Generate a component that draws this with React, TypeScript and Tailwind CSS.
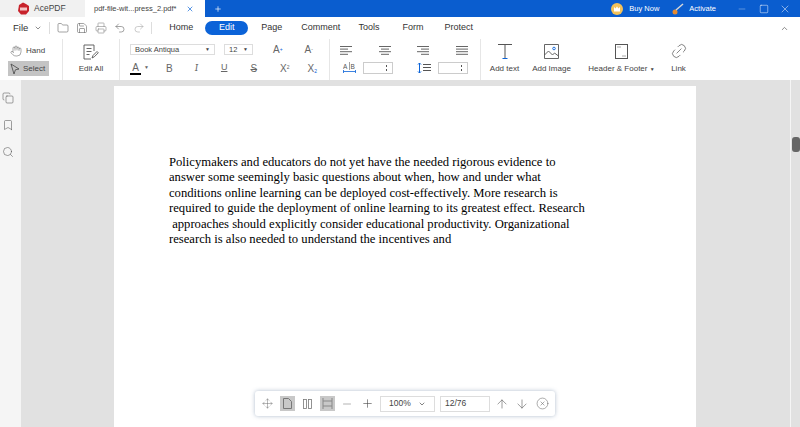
import { Hand, Undo2, Redo2, Printer, Save, Folder, ChevronDown, ChevronUp, Plus, X, Minus, Square, ArrowUp, ArrowDown, CircleX, Move, Bookmark, Search, Copy, Link2 } from "lucide-react";

const label = "text-[8px] leading-[10px] text-[#444] whitespace-nowrap";

function AlignIcon({ kind }: { kind: string }) {
  const rows = kind === "left" ? [[0, 12], [0, 8], [0, 12], [0, 8]] : kind === "center" ? [[0, 12], [2, 10], [0, 12], [2, 10]] : kind === "right" ? [[0, 12], [4, 12], [0, 12], [4, 12]] : [[0, 12], [0, 12], [0, 12], [0, 12]];
  return (
    <svg width="12" height="9" viewBox="0 0 12 9" stroke="#666" strokeWidth="1">
      {rows.map((r, i) => <line key={i} x1={r[0]} x2={r[1]} y1={i * 2.6 + 0.5} y2={i * 2.6 + 0.5} />)}
    </svg>
  );
}

function Spin() {
  return (
    <div className="w-[30px] h-[12px] border border-[#ccc] flex items-center justify-end pr-[4px]">
      <svg width="3" height="8" viewBox="0 0 3 8" fill="#555"><rect x="1" y="1" width="1" height="2" /><rect x="1" y="5" width="1" height="2" /></svg>
    </div>
  );
}

function Menu() {
  return (
    <div className="h-[22px] flex items-center text-[9px] text-[#333]">
      <span className="ml-[13px] text-[9.5px]">File</span>
      <ChevronDown size={8} className="ml-[6px] text-[#555]" />
      <div className="w-px h-[12px] bg-[#ddd] ml-[7px]" />
      <div className="flex items-center gap-[7px] ml-[7px] text-[#666]">
        <Folder size={12} strokeWidth={1.2} />
        <Save size={12} strokeWidth={1.2} />
        <Printer size={12} strokeWidth={1.2} className="text-[#888]" />
        <Undo2 size={12} strokeWidth={1.2} />
        <Redo2 size={12} strokeWidth={1.2} className="text-[#aaa]" />
      </div>
      <div className="w-px h-[12px] bg-[#ddd] ml-[6px]" />
      <span className="ml-[17px]">Home</span>
      <span className="ml-[12px] w-[43px] h-[14px] rounded-full bg-[#0b63d8] text-white flex items-center justify-center">Edit</span>
      <span className="ml-[13px]">Page</span>
      <span className="ml-[19px]">Comment</span>
      <span className="ml-[18px]">Tools</span>
      <span className="ml-[23px]">Form</span>
      <span className="ml-[21px]">Protect</span>
      <ChevronUp size={9} className="ml-auto mr-[11px] text-[#666]" />
    </div>
  );
}

function Ribbon() {
  return (
    <div className="h-[41px] flex text-[#555]">
      <div className="w-[63px] border-r border-[#e6e6e6] pl-[8px] shrink-0">
        <div className="h-[17px] flex items-center gap-[4px] pl-[2px] pt-[6px]">
          <Hand size={12} strokeWidth={1} />
          <span className={label}>Hand</span>
        </div>
        <div className="w-[41px] h-[15px] mt-[5px] bg-[#c4c4c4] flex items-center gap-[3px] pl-[2px]">
          <svg width="10" height="12" viewBox="0 0 10 12" fill="none" stroke="#444" strokeWidth="0.8" strokeLinejoin="round"><path d="M1 1l8 5-3.6.8L4 11z" /></svg>
          <span className={label}>Select</span>
        </div>
      </div>
      <div className="w-[57px] border-r border-[#e6e6e6] flex flex-col items-center shrink-0">
        <svg className="mt-[5px]" width="16" height="16" viewBox="0 0 16 16" fill="none" stroke="#555" strokeWidth="0.9">
          <path d="M11 7V1H1v14h7" />
          <path d="M3.5 4.5h5M3.5 7.5h5M3.5 10.5h3" />
          <path d="M9 14l1-2.5 4-4 1.3 1.3-4 4z" />
        </svg>
        <span className={`${label} mt-[4px]`}>Edit All</span>
      </div>
      <div className="w-[210px] border-r border-[#e6e6e6] pl-[10px] shrink-0">
        <div className="flex items-center h-[11px] mt-[5px]">
          <div className="w-[85px] h-[11px] border border-[#ddd] flex items-center justify-between px-[4px] text-[7.5px] text-[#444]">
            <span>Book Antiqua</span><span className="text-[5px]">▼</span>
          </div>
          <div className="w-[29px] h-[11px] ml-[9px] border border-[#ddd] flex items-center justify-between px-[4px] text-[7.5px] text-[#444]">
            <span>12</span><span className="text-[5px]">▼</span>
          </div>
          <span className="ml-[20px] text-[10px] text-[#666]">A<sup className="text-[5px] text-[#0b63d8]">+</sup></span>
          <span className="ml-[22px] text-[10px] text-[#666]">A<sup className="text-[5px]">-</sup></span>
        </div>
        <div className="flex items-center h-[14px] mt-[6px] text-[10px] text-[#666]">
          <span className="border-b-2 border-black leading-[11px] w-[11px] text-center">A</span>
          <span className="text-[5px] ml-[3px]">▼</span>
          <span className="ml-[17px]">B</span>
          <span className="italic font-serif ml-[22px]">I</span>
          <span className="underline ml-[23px] text-[9px]">U</span>
          <span className="line-through ml-[23px]">S</span>
          <span className="ml-[23px]">X<sup className="text-[5px]">2</sup></span>
          <span className="ml-[18px]">X<sub className="text-[5px] text-[#0b63d8]">2</sub></span>
        </div>
      </div>
      <div className="w-[151px] border-r border-[#e6e6e6] pl-[10px] shrink-0">
        <div className="flex gap-[26.5px] h-[9px] mt-[7px]">
          <AlignIcon kind="left" />
          <AlignIcon kind="center" />
          <AlignIcon kind="right" />
          <AlignIcon kind="full" />
        </div>
        <div className="flex items-center h-[12px] mt-[7px]">
          <svg className="ml-[3px]" width="13" height="12" viewBox="0 0 13 12" fill="none" strokeWidth="0.8">
            <text x="0" y="6.5" fontSize="6.5" fill="#555">A</text>
            <text x="7.5" y="6.5" fontSize="6.5" fill="#555">B</text>
            <path d="M6.5 0v8" stroke="#888" />
            <path d="M.5 8v3M12.5 8v3M.5 9.5h12" stroke="#0b63d8" />
          </svg>
          <div className="ml-[7px]"><Spin /></div>
          <svg className="ml-[24px]" width="14" height="12" viewBox="0 0 14 12" fill="none" strokeWidth="1">
            <path d="M2.5 1v10M1 2.5L2.5 1 4 2.5M1 9.5L2.5 11 4 9.5" stroke="#0b63d8" />
            <path d="M6 2.5h8M6 5.5h8M6 8.5h8" stroke="#555" />
          </svg>
          <div className="ml-[7px]"><Spin /></div>
        </div>
      </div>
      <div className="flex flex-col items-center w-[47px] shrink-0">
        <svg className="mt-[5px]" width="14" height="15" viewBox="0 0 14 15" fill="none" strokeWidth="1">
          <path d="M0 .5h14M7 .5v14" stroke="#555" />
          <path d="M4.5 14.5h5" stroke="#0b63d8" />
        </svg>
        <span className={`${label} mt-[5px]`}>Add text</span>
      </div>
      <div className="flex flex-col items-center w-[47px] shrink-0">
        <svg className="mt-[5px]" width="15" height="15" viewBox="0 0 15 15" fill="none" stroke="#555" strokeWidth="0.9">
          <path d="M.5.5h14v14H.5z" />
          <path d="M.5 11l4-4 4 4 2-2 4 3" />
          <circle cx="10" cy="4.5" r="1.3" stroke="#0b63d8" />
        </svg>
        <span className={`${label} mt-[5px]`}>Add Image</span>
      </div>
      <div className="flex flex-col items-center w-[93px] shrink-0">
        <svg className="mt-[5px]" width="13" height="15" viewBox="0 0 13 15" fill="none" stroke="#555"><rect x="0.5" y="0.5" width="12" height="14" /><line x1="2" x2="6" y1="3" y2="3" stroke="#aaa" /><line x1="7" x2="11" y1="12" y2="12" stroke="#aaa" /></svg>
        <span className={`${label} mt-[5px]`}>Header &amp; Footer <span className="text-[5px]">▼</span></span>
      </div>
      <div className="flex flex-col items-center w-[21px] shrink-0">
        <Link2 size={18} strokeWidth={0.9} className="mt-[3px] -rotate-45" />
        <span className={`${label} mt-[4px]`}>Link</span>
      </div>
    </div>
  );
}

const lines = [
  "Policymakers and educators do not yet have the needed rigorous evidence to",
  "answer some seemingly basic questions about when, how and under what",
  "conditions online learning can be deployed cost-effectively. More research is",
  "required to guide the deployment of online learning to its greatest effect. Research",
  "\u00a0approaches should explicitly consider educational productivity. Organizational",
  "research is also needed to understand the incentives and",
];

export default function App() {
  return (
    <div className="w-[800px] h-[427px] overflow-hidden flex flex-col bg-white font-['Liberation_Sans',sans-serif] relative">
      {/* title bar */}
      <div className="h-[17px] flex items-center shrink-0 bg-[#0a5dcf] text-white">
        <div className="w-[85px] h-full bg-[#f1f1f1] flex items-center text-[#444] text-[8.5px]">
          <svg className="ml-[17px]" width="13" height="13" viewBox="0 0 13 13"><path d="M2 3l4-2.5 3 1.5 3 2v5l-3 3.5H4L1 9z" fill="#c8232c" /><rect x="3" y="5.5" width="7" height="3" fill="#f3c6c6" /></svg>
          <span className="ml-[4px]">AcePDF</span>
        </div>
        <div className="w-[120px] h-full bg-white flex items-center text-[#444] text-[7.5px]">
          <span className="ml-[9px] w-[92px] whitespace-nowrap">pdf-file-wit...press_2.pdf*</span>
          <X size={8} className="text-[#0b63d8]" />
        </div>
        <Plus size={8} className="ml-[9px]" />
        <div className="ml-auto flex items-center text-[7.5px]">
          <svg width="12" height="12" viewBox="0 0 12 12"><circle cx="6" cy="6" r="6" fill="#f3c25a" /><path d="M3 8.5V4l1.7 1.6L6 3.2l1.3 2.4L9 4v4.5z" fill="#fff" /></svg>
          <span className="ml-[6px]">Buy Now</span>
          <svg className="ml-[13px]" width="15" height="12" viewBox="0 0 15 12" fill="none"><circle cx="3" cy="9" r="2.5" fill="#e58a2e" /><line x1="4" x2="11" y1="7" y2="1" stroke="#d8d8d8" strokeWidth="1.5" /></svg>
          <span className="ml-[2px]">Activate</span>
          <Minus size={10} strokeWidth={1} className="ml-[21px] opacity-80" />
          <Square size={10} strokeWidth={1.2} className="ml-[12px]" />
          <X size={12} strokeWidth={1} className="ml-[10px] mr-[9px]" />
        </div>
      </div>

      <Menu />
      <Ribbon />

      {/* body */}
      <div className="flex-1 flex bg-[#e1e1e1] min-h-0">
        <div className="w-[21px] bg-[#f5f5f5] flex flex-col pl-[2px] pt-[12px] gap-[15px] text-[#555] shrink-0">
          <Copy size={12} strokeWidth={1.1} />
          <Bookmark size={12} strokeWidth={1.1} />
          <Search size={12} strokeWidth={1.1} />
        </div>
        <div className="w-[93px] shrink-0" />
        <div className="w-[582px] bg-white mt-[6px] pl-[55px] pt-[69px] shrink-0">
          <div className="font-['Liberation_Serif',serif] text-[12.65px] leading-[15.4px] text-black whitespace-nowrap">
            {lines.map((l, i) => <div key={i}>{l}</div>)}
          </div>
        </div>
        <div className="w-[94px] shrink-0" />
        <div className="w-[10px] border-l border-[#f5f5f5] pt-[57px] shrink-0">
          <div className="w-[8px] h-[15px] rounded-[3px] bg-[#666] ml-px" />
        </div>
      </div>

      {/* floating page toolbar */}
      <div className="absolute left-[255px] top-[391px] w-[300px] h-[25px] bg-white rounded-[3px] shadow-[0_0_4px_rgba(60,90,130,0.4)] flex items-center text-[#666]">
        <Move size={11} strokeWidth={1} className="ml-[7px]" />
        <div className="ml-[7px] w-[15px] h-[15px] bg-[#c8c8c8] flex items-center justify-center"><svg width="9" height="11" viewBox="0 0 9 11" fill="none" stroke="#777"><path d="M.5.5h5l3 3v7h-8z" /></svg></div>
        <svg className="ml-[8px]" width="9" height="10" viewBox="0 0 9 10" fill="none" stroke="#777" strokeWidth="0.8"><rect x="0.5" y="0.5" width="3" height="9" /><rect x="5.5" y="0.5" width="3" height="9" /></svg>
        <div className="ml-[8px] w-[15px] h-[15px] bg-[#c8c8c8] flex items-center justify-center"><svg width="11" height="11" viewBox="0 0 11 11" fill="none" stroke="#888"><path d="M1 0v3h9V0M1 11V8h9v3M1 3v5M10 3v5" /></svg></div>
        <Minus size={12} strokeWidth={1} className="ml-[6px]" />
        <Plus size={13} strokeWidth={1.1} className="ml-[8px] text-[#444]" />
        <div className="ml-[6px] w-[55px] h-[16px] border border-[#ddd] flex items-center justify-between px-[8px] text-[8.5px] text-[#444]">
          <span>100%</span><ChevronDown size={8} />
        </div>
        <div className="ml-[5px] w-[50px] h-[16px] border border-[#ddd] flex items-center px-[4px] text-[8.5px] text-[#444]">12/76</div>
        <ArrowUp size={14} strokeWidth={1.1} className="ml-[5px]" />
        <ArrowDown size={14} strokeWidth={1.1} className="ml-[6px]" />
        <CircleX size={13} strokeWidth={1} className="ml-[7px]" />
      </div>
    </div>
  );
}
